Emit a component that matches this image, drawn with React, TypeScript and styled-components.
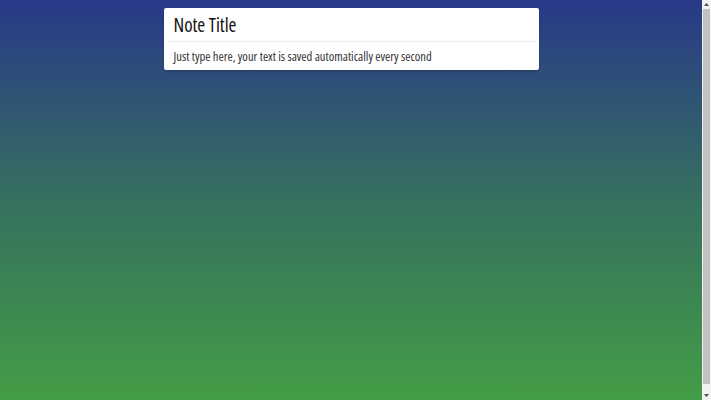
import React from "react";
import styled, { createGlobalStyle } from "styled-components";

const Global = createGlobalStyle`
  html, body {
    margin: 0;
    height: 100%;
    overflow: hidden;
  }
  body {
    font-family: "Open Sans", sans-serif;
    font-stretch: 75%;
  }
`;

const Viewport = styled.div`
  display: flex;
  height: 100vh;
`;

const Main = styled.div`
  flex: 1;
  min-width: 0;
  padding-top: 8px;
  background: linear-gradient(to bottom, #283988 0%, #36705f 50%, #439d46 100%);
`;

const ScrollBar = styled.div`
  width: 9px;
  display: flex;
  flex-direction: column;
  background: #f1f1f1;
`;

const ScrollArrow = styled.div`
  height: 9px;
  display: flex;
  align-items: center;
  justify-content: center;
`;

const ScrollTrack = styled.div`
  flex: 1;
  display: flex;
  flex-direction: column;
  padding-bottom: 7px;
`;

const ScrollThumb = styled.div`
  flex: 1;
  background: #c1c1c1;
  margin: 0 1px;
`;

const Card = styled.div`
  width: 375px;
  margin: 0 auto;
  background: #fff;
  border-radius: 2px;
  box-shadow: 0 1px 2px rgba(0, 0, 0, 0.25);
`;

const Title = styled.div`
  height: 33px;
  display: flex;
  align-items: center;
  margin: 0 4px;
  padding: 0 6px;
  border-bottom: 1px solid #ececec;
  font-size: 19px;
  color: #111;
`;

const Body = styled.div`
  height: 27px;
  display: flex;
  align-items: center;
  padding: 1px 10px 0;
  font-size: 12.6px;
  color: #333;
`;

const Arrow = ({ down }: { down?: boolean }) => (
  <svg width="5" height="3" viewBox="0 0 5 3">
    <polygon points={down ? "0,0 5,0 2.5,3" : "0,3 5,3 2.5,0"} fill="#505050" />
  </svg>
);

export default function App() {
  return (
    <>
      <Global />
      <Viewport>
        <Main>
          <Card>
            <Title>Note Title</Title>
            <Body>Just type here, your text is saved automatically every second</Body>
          </Card>
        </Main>
        <ScrollBar>
          <ScrollArrow>
            <Arrow />
          </ScrollArrow>
          <ScrollTrack>
            <ScrollThumb />
          </ScrollTrack>
          <ScrollArrow>
            <Arrow down />
          </ScrollArrow>
        </ScrollBar>
      </Viewport>
    </>
  );
}
